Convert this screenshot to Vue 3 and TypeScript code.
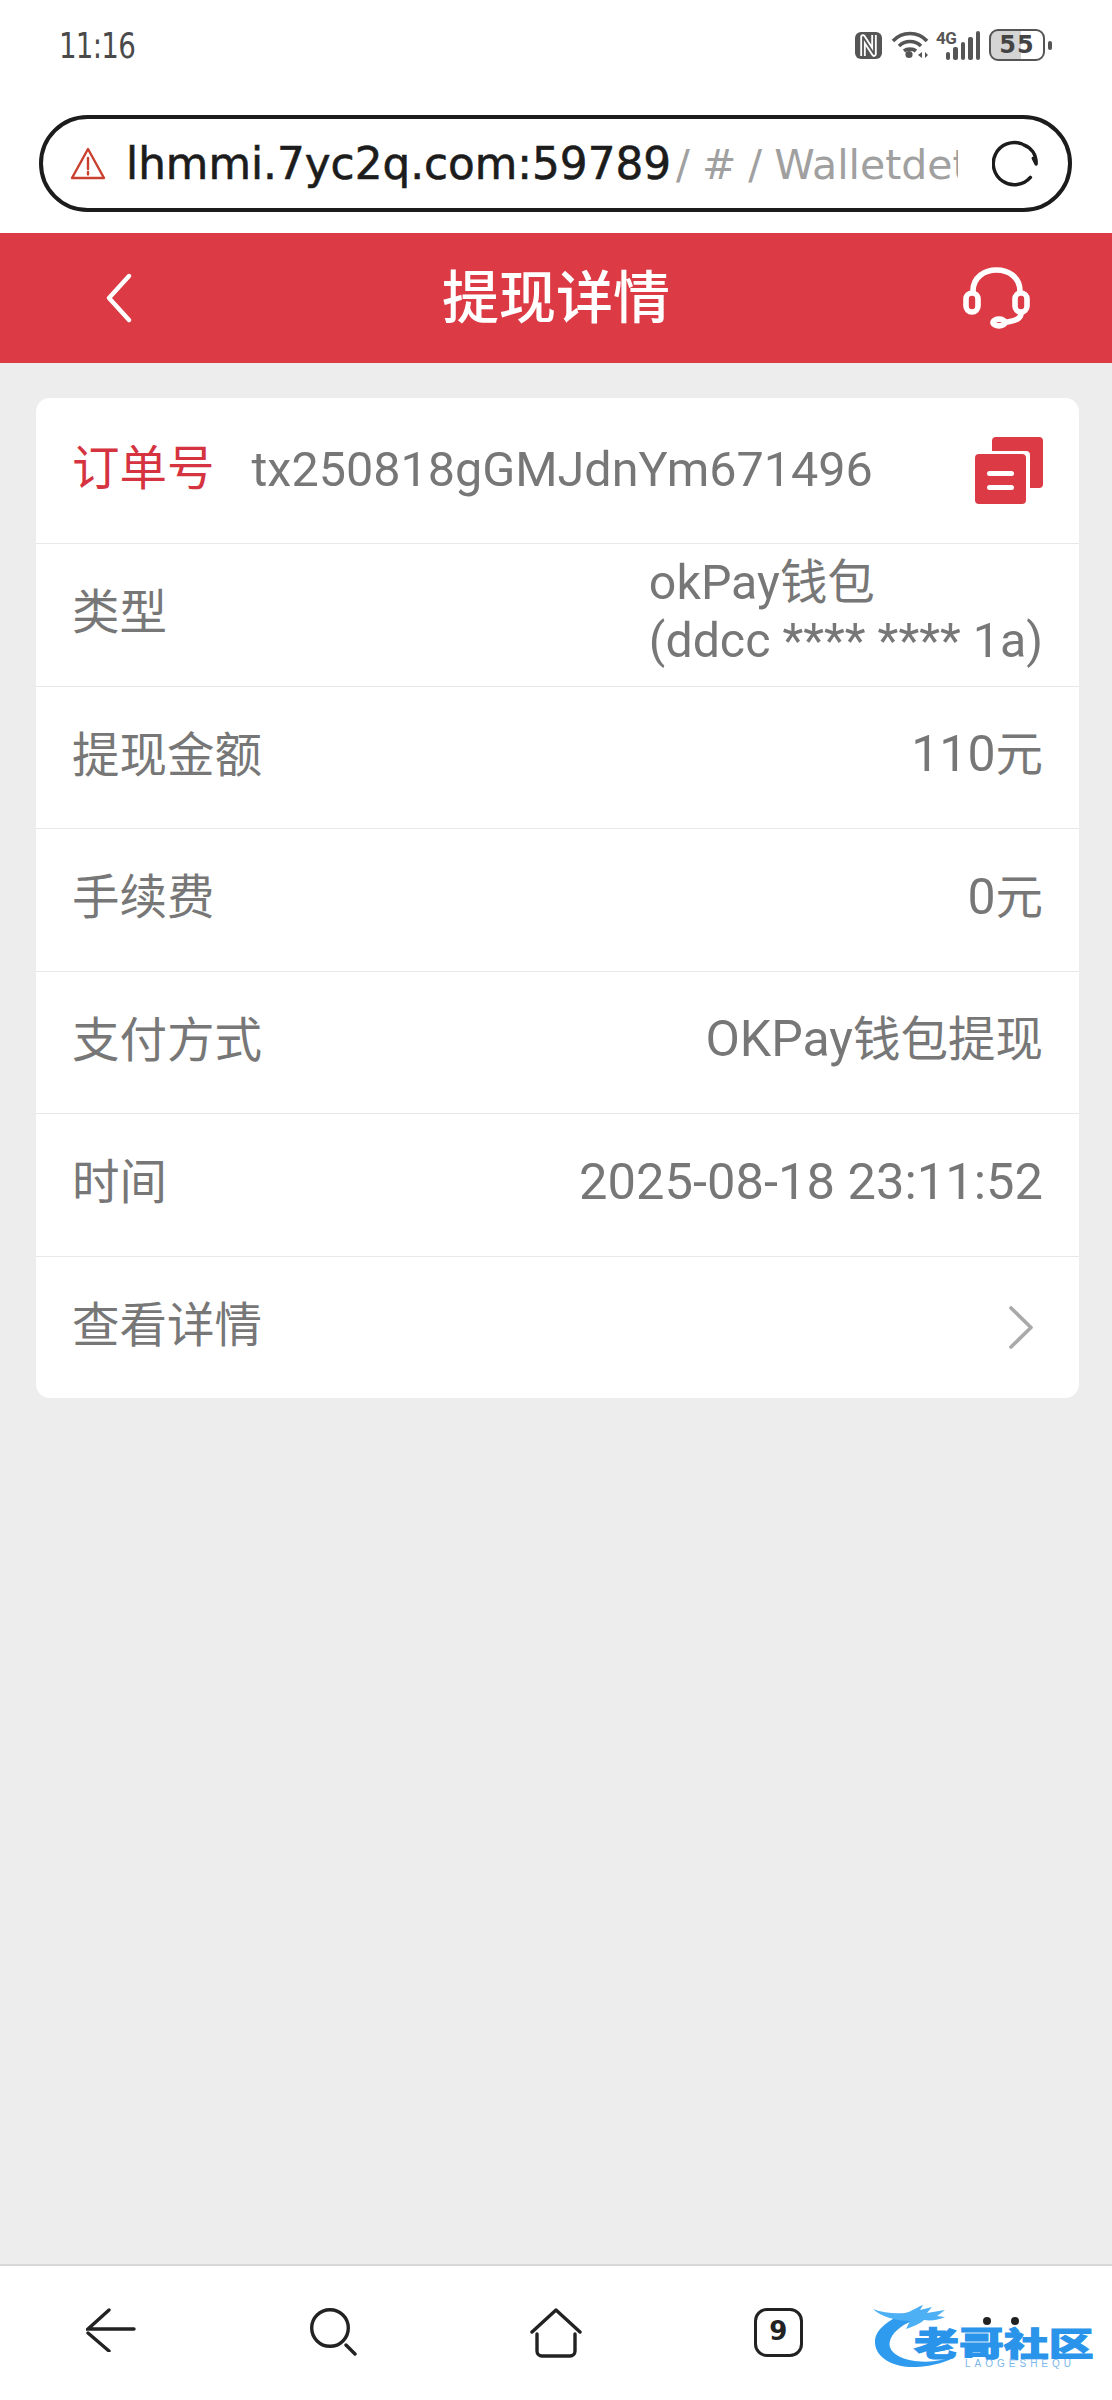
<template>
  <div class="page">
    <header class="top">
      <div class="status">
        <span class="time">11:16</span>
        <div class="status-icons">
          <svg width="27" height="27" viewBox="0 0 27 27" fill="none" stroke-linejoin="round">
            <rect width="27" height="27" rx="6" fill="#555" />
            <path d="M8 24V5l11 17V3" stroke="#fff" stroke-width="5.500" />
            <path d="M8 24V5l11 17V3" stroke="#555" stroke-width="1.800" />
          </svg>
          <svg width="38" height="28" viewBox="0 0 38 28" fill="none" stroke="#555" stroke-width="3.6">
            <path d="M2 10C11 0 27 0 36 10M8 15c6-6 16-6 22 0M13 20c3-2.5 9-2.5 12 0" />
            <circle cx="18" cy="23.5" r="3.6" fill="#555" stroke="none" />
            <path d="M27 24l4-3v6zM37 24l-3-3v6z" fill="#555" stroke="none" />
          </svg>
          <div class="signal">
            <span class="net">4G</span>
            <i style="height: 8px"></i><i style="height: 13px"></i><i style="height: 18px"></i><i style="height: 23px"></i><i style="height: 29px"></i>
          </div>
          <div class="battery">
            <div class="battery-body"><span>55</span></div>
            <i class="battery-nub"></i>
          </div>
        </div>
      </div>
      <div class="address">
        <svg class="warn" width="36" height="33" viewBox="0 0 36 33" fill="none" stroke="#c9402f" stroke-width="2.4" stroke-linejoin="round">
          <path d="M18 2L34 31H2z" />
          <path d="M18 11v11M18 25v2.4" stroke-linecap="round" />
        </svg>
        <div class="url"><b>lhmmi.7yc2q.com:59789</b><em>/ # / Walletdetail</em></div>
        <svg width="50" height="48" viewBox="0 0 50 48" fill="none" stroke="#1c1c1c" stroke-width="3.6" stroke-linecap="round">
          <path d="M31 3A22 22 0 1 0 40 38" />
          <path d="M33 4c8 3 13 10 13 19M46 24l-3-6" />
        </svg>
      </div>
    </header>

    <div class="titlebar">
      <svg class="back" width="26" height="50" viewBox="0 0 26 50" fill="none" stroke="#fff" stroke-width="4.4" stroke-linecap="round" stroke-linejoin="round">
        <path d="M23 3L3 25l20 22" />
      </svg>
      <h1>提现详情</h1>
      <svg class="headset" width="67" height="62" viewBox="0 0 67 62" fill="none" stroke="#fff" stroke-width="5.6" stroke-linecap="round">
        <path d="M10 24C10 -4 57 -4 57 24" />
        <rect x="3" y="26" width="12" height="19" rx="6" />
        <rect x="52" y="26" width="12" height="19" rx="6" />
        <path d="M58 47c-1 6-8 7-14 8" />
        <ellipse cx="36" cy="55.500" rx="6" ry="3.400" />
      </svg>
    </div>

    <main class="body">
      <section class="card">
        <div class="row order">
          <span class="order-label">订单号</span>
          <span class="order-no">{{ orderNo }}</span>
          <svg class="copy" width="68" height="67" viewBox="0 0 68 67">
            <path d="M21 0h43a4 4 0 0 1 4 4v43a4 4 0 0 1-4 4h-9V18a4 4 0 0 0-4-4H17v-10a4 4 0 0 1 4-4z" fill="#dc3a44" />
            <rect x="0" y="17" width="51" height="50" rx="4" fill="#dc3a44" />
            <rect x="12" y="34" width="27" height="5" rx="2.5" fill="#fff" />
            <rect x="12" y="48" width="27" height="5" rx="2.5" fill="#fff" />
          </svg>
        </div>
        <div class="row" v-for="item in rows" :key="item.label">
          <span class="label">{{ item.label }}</span>
          <div class="value" :class="item.kind">
            <div v-for="line in item.lines" :key="line">
              <span v-for="(part, i) in split(line)" :key="i" :class="{ zh: part.zh }">{{ part.text }}</span>
            </div>
          </div>
        </div>
        <div class="row">
          <span class="label">查看详情</span>
          <svg width="26" height="43" viewBox="0 0 26 43" fill="none" stroke="#a9a9a9" stroke-width="3.6" stroke-linecap="round" stroke-linejoin="round" class="more">
            <path d="M3 2l20 19.500L3 41" />
          </svg>
        </div>
      </section>
    </main>

    <nav class="nav">
      <div class="nav-item">
        <svg width="50" height="44" viewBox="0 0 50 44" fill="none" stroke="#222" stroke-width="3.4" stroke-linecap="round">
          <path d="M23 2L2 21h46M2 25l21 18" />
        </svg>
      </div>
      <div class="nav-item">
        <svg width="48" height="48" viewBox="0 0 48 48" fill="none" stroke="#222" stroke-width="3.4" stroke-linecap="round">
          <circle cx="20" cy="20" r="18.300" />
          <path d="M36 37l9 9" />
        </svg>
      </div>
      <div class="nav-item">
        <svg width="52" height="50" viewBox="0 0 52 50" fill="none" stroke="#222" stroke-width="3.4" stroke-linecap="round" stroke-linejoin="round">
          <path d="M2 24L26 2l24 22" />
          <path d="M7 26v17a5 5 0 0 0 5 5h28a5 5 0 0 0 5-5V26" />
        </svg>
      </div>
      <div class="nav-item">
        <div class="tabs">9</div>
      </div>
      <div class="nav-item">
        <div class="dots"><i></i><i></i></div>
      </div>

      <div class="logo">
        <svg width="90" height="63" viewBox="0 0 90 63">
          <path d="M28 10C10 18 1 28 2 38c1 16 20 25 42 24 16-1 32-5 40-12-14 6-28 8-42 6C26 54 14 46 17 36c2-8 10-15 22-20z" fill="#2f9bee" />
          <path d="M0 4c10 4 22 5 32 4 8-2 12-6 18-8l-3 5 12-3-5 6 18-3-8 6 8 1c-6 3-14 4-21 3-4 4-12 7-18 9l4-8C24 16 8 12 0 4z" fill="#4db0f4" />
        </svg>
        <div class="logo-text">老哥社区</div>
        <div class="logo-sub">LAOGESHEQU</div>
      </div>
    </nav>
  </div>
</template>

<script setup lang="ts">
type DetailRow = {
  label: string
  lines: string[]
  kind?: string
}

const orderNo = 'tx250818gGMJdnYm671496'

const rows: DetailRow[] = [
  { label: '类型', lines: ['okPay钱包', '(ddcc **** **** 1a)'], kind: 'narrow' },
  { label: '提现金额', lines: ['110元'] },
  { label: '手续费', lines: ['0元'] },
  { label: '支付方式', lines: ['OKPay钱包提现'] },
  { label: '时间', lines: ['2025-08-18 23:11:52'], kind: 'wide' },
]

// chinese glyphs are set a bit smaller than the latin ones
function split(text: string) {
  return (text.match(/[\u4e00-\u9fff]+|[^\u4e00-\u9fff]+/g) || []).map((t) => ({
    text: t,
    zh: /[\u4e00-\u9fff]/.test(t),
  }))
}
</script>

<style scoped>
.page {
  width: 1112px;
  height: 2400px;
  display: flex;
  flex-direction: column;
  background: #ededed;
  font-family: Roboto, "Noto Sans CJK SC", sans-serif;
  overflow: hidden;
}
.top {
  height: 233px;
  background: #fff;
  box-sizing: border-box;
  padding-top: 29px;
}
.status {
  height: 32px;
  padding: 0 60px 0 59px;
  display: flex;
  justify-content: space-between;
  align-items: center;
}
.time {
  font-family: "DejaVu Sans", sans-serif;
  font-size: 36px;
  letter-spacing: -1px;
  color: #4a4a4a;
  transform: scaleX(0.77);
  transform-origin: left center;
}
.status-icons {
  display: flex;
  align-items: center;
  gap: 9px;
}
.signal {
  position: relative;
  width: 42px;
  height: 29px;
  display: flex;
  align-items: flex-end;
  justify-content: flex-end;
  gap: 3px;
}
.signal i {
  width: 4.500px;
  border-radius: 2px;
  background: #555;
}
.net {
  position: absolute;
  left: -2px;
  top: -3px;
  font-size: 17px;
  font-weight: 700;
  letter-spacing: -0.5px;
  color: #555;
}
.battery {
  display: flex;
  align-items: center;
  gap: 3px;
}
.battery-body {
  width: 56px;
  height: 32px;
  box-sizing: border-box;
  border: 2.500px solid #555;
  border-radius: 9px;
  background: linear-gradient(90deg, #d4d4d4 58%, #fff 58%);
  display: flex;
  align-items: center;
  justify-content: center;
}
.battery-body span {
  font-family: "DejaVu Sans", sans-serif;
  font-size: 24px;
  font-weight: 700;
  line-height: 1;
  color: #444;
  letter-spacing: 1px;
}
.battery-nub {
  width: 4px;
  height: 9px;
  border-radius: 2px;
  background: #555;
}
.address {
  margin: 54px 40px 0 39px;
  height: 97px;
  box-sizing: border-box;
  border: 4px solid #1c1c1c;
  border-radius: 49px;
  display: flex;
  align-items: center;
  padding: 0 28px 0 27px;
}
.warn {
  flex: none;
}
.url {
  flex: none;
  width: 832px;
  margin-left: 20px;
  margin-right: 34px;
  overflow: hidden;
  white-space: nowrap;
  font-family: "DejaVu Sans", sans-serif;
  font-size: 43.700px;
}
.url b {
  font-weight: 400;
  color: #1c1c1c;
  -webkit-text-stroke: 0.6px #1c1c1c;
}
.url em {
  font-style: normal;
  color: #a0a0a0;
  margin-left: 5px;
  font-size: 41px;
  word-spacing: -1px;
  letter-spacing: 0;
}
.titlebar {
  height: 130px;
  flex: none;
  background: #dc3a44;
  display: grid;
  grid-template-columns: 1fr auto 1fr;
  align-items: center;
  padding: 0 82px 0 106px;
}
.titlebar h1 {
  margin: 0 0 10px -24px;
  font-size: 57px;
  line-height: 1;
  font-weight: 500;
  color: #fff;
  font-family: "Noto Sans CJK SC", sans-serif;
}
.headset {
  justify-self: end;
}
.body {
  flex: 1;
  padding: 35px 33px 0 36px;
}
.card {
  background: #fff;
  border-radius: 14px;
  overflow: hidden;
}
.row {
  min-height: 142.500px;
  box-sizing: border-box;
  padding: 0 36px 0 36px;
  border-top: 1.500px solid #e8e8e8;
  display: flex;
  justify-content: space-between;
  align-items: center;
  color: #777;
  font-size: 50px;
}
.row.order {
  min-height: 145px;
  border-top: 0;
  justify-content: flex-start;
}
.label {
  font-family: "Noto Sans CJK SC", sans-serif;
  font-size: 47.500px;
  margin-bottom: 12px;
}
.order-label {
  font-family: "Noto Sans CJK SC", sans-serif;
  font-size: 47.500px;
  color: #d5333f;
  margin-right: 37px;
  margin-bottom: 12px;
}
.order-no {
  font-size: 48.500px;
  margin-bottom: 3px;
}
.copy {
  margin-left: auto;
}
.value {
  line-height: 58px;
  margin-bottom: 6px;
}
.value.narrow {
  font-size: 48.300px;
}
.value.wide {
  font-size: 50.700px;
}
.zh {
  font-family: "Noto Sans CJK SC", sans-serif;
  font-size: 47.500px;
  line-height: 1;
}
.more {
  margin-right: 9px;
}
.nav {
  position: relative;
  height: 136px;
  flex: none;
  box-sizing: border-box;
  background: #fff;
  border-top: 2px solid #d8d8d8;
  display: grid;
  grid-template-columns: repeat(5, 1fr);
  padding-top: 42px;
  align-items: start;
}
.nav-item {
  display: flex;
  justify-content: center;
}
.tabs {
  width: 49px;
  height: 49px;
  box-sizing: border-box;
  border: 3.400px solid #222;
  border-radius: 13px;
  text-align: center;
  font-family: "DejaVu Sans", sans-serif;
  font-size: 26px;
  font-weight: 700;
  line-height: 41px;
  color: #222;
}
.dots {
  display: flex;
  gap: 20px;
  margin-top: 9px;
}
.dots i {
  width: 8px;
  height: 8px;
  border-radius: 50%;
  background: #222;
}
.logo {
  position: absolute;
  left: 873px;
  top: 39px;
  width: 222px;
  height: 63px;
}
.logo-text {
  position: absolute;
  left: 41px;
  top: 19px;
  white-space: nowrap;
  font-family: "Noto Sans CJK SC", sans-serif;
  font-size: 33px;
  font-weight: 900;
  line-height: 36px;
  color: #2a94ea;
  -webkit-text-stroke: 1px #2a94ea;
  transform: scaleX(1.36);
  transform-origin: left center;
}
.logo-sub {
  position: absolute;
  left: 92px;
  top: 54px;
  font-family: "Liberation Sans", sans-serif;
  font-size: 10px;
  line-height: 10px;
  letter-spacing: 4px;
  color: #7ab8ec;
}
</style>

<style>
html,
body {
  background: #ededed;
}
</style>
